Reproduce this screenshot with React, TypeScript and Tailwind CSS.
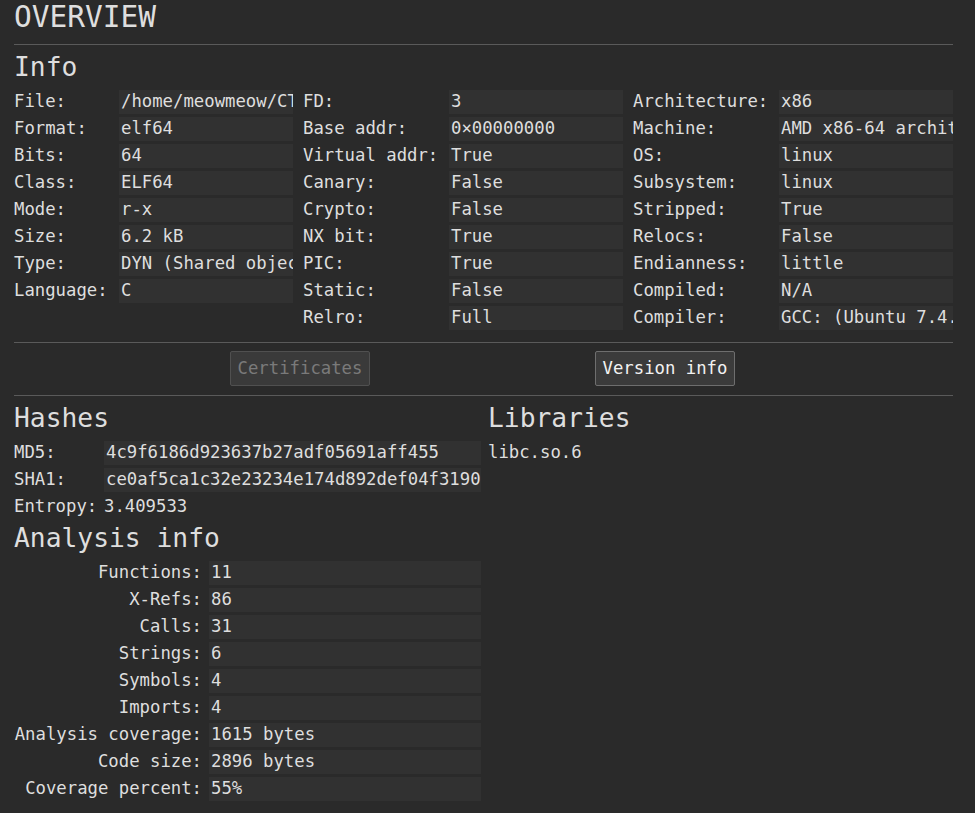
import React from "react";

const font = { fontFamily: '"DejaVu Sans Mono", "Liberation Mono", monospace' };

const col1: [string, string][] = [
  ["File:", "/home/meowmeow/CTF/rev/challenge"],
  ["Format:", "elf64"],
  ["Bits:", "64"],
  ["Class:", "ELF64"],
  ["Mode:", "r-x"],
  ["Size:", "6.2 kB"],
  ["Type:", "DYN (Shared object file)"],
  ["Language:", "C"],
];
const col2: [string, string][] = [
  ["FD:", "3"],
  ["Base addr:", "0×00000000"],
  ["Virtual addr:", "True"],
  ["Canary:", "False"],
  ["Crypto:", "False"],
  ["NX bit:", "True"],
  ["PIC:", "True"],
  ["Static:", "False"],
  ["Relro:", "Full"],
];
const col3: [string, string][] = [
  ["Architecture:", "x86"],
  ["Machine:", "AMD x86-64 architecture"],
  ["OS:", "linux"],
  ["Subsystem:", "linux"],
  ["Stripped:", "True"],
  ["Relocs:", "False"],
  ["Endianness:", "little"],
  ["Compiled:", "N/A"],
  ["Compiler:", "GCC: (Ubuntu 7.4.0-1ubuntu1~18.04.1) 7.4.0"],
];
const analysis: [string, string][] = [
  ["Functions:", "11"],
  ["X-Refs:", "86"],
  ["Calls:", "31"],
  ["Strings:", "6"],
  ["Symbols:", "4"],
  ["Imports:", "4"],
  ["Analysis coverage:", "1615 bytes"],
  ["Code size:", "2896 bytes"],
  ["Coverage percent:", "55%"],
];

function Group({ rows, labelW }: { rows: [string, string][]; labelW: string }) {
  return (
    <div className={`grid ${labelW} gap-y-[3px] auto-rows-[24px]`}>
      {rows.map(([l, v]) => (
        <React.Fragment key={l}>
          <div className="flex items-center whitespace-nowrap">{l}</div>
          <div className="flex items-center bg-[#313131] px-[2px] overflow-hidden whitespace-nowrap">{v}</div>
        </React.Fragment>
      ))}
    </div>
  );
}

function Line() {
  return <div className="h-px bg-[#5a5a5a]" />;
}

export default function App() {
  return (
    <div
      className="w-[975px] h-[813px] overflow-hidden bg-[#2a2a2a] text-[#dedede] text-[17.3px] leading-none pl-[14px] pr-[22px]"
      style={font}
    >
      <div className="h-[44px] flex items-center text-[29.5px] pb-[8px]">OVERVIEW</div>
      <Line />
      <div className="h-[45px] flex items-center text-[26.3px] pb-[1px]">Info</div>
      <div className="flex gap-[10px]">
        <Group rows={col1} labelW="grid-cols-[105px_174px]" />
        <Group rows={col2} labelW="grid-cols-[146px_174px]" />
        <Group rows={col3} labelW="grid-cols-[146px_174px]" />
      </div>
      <div className="h-[12px]" />
      <Line />
      <div className="flex pl-[216px] gap-[225px] pt-[8px] pb-[9px]">
        <button className="h-[35px] w-[140px] flex items-center justify-center bg-[#3a3a3a] border border-[#505050] rounded-[2px] text-[#7a7a7a]">
          Certificates
        </button>
        <button className="h-[35px] w-[140px] flex items-center justify-center bg-[#3b3b3b] border border-[#6e6e6e] rounded-[2px] text-[#f2f2f2]">
          Version info
        </button>
      </div>
      <Line />
      <div className="flex gap-[7px]">
        <div className="w-[467px] flex flex-col">
          <div className="h-[45px] flex items-center text-[26.3px] pb-[1px]">Hashes</div>
          <div className="grid grid-cols-[90px_377px] gap-y-[3px] auto-rows-[24px]">
            <div className="flex items-center">MD5:</div>
            <div className="flex items-center bg-[#313131] px-[2px] whitespace-nowrap overflow-hidden">4c9f6186d923637b27adf05691aff455</div>
            <div className="flex items-center">SHA1:</div>
            <div className="flex items-center bg-[#313131] px-[2px] whitespace-nowrap overflow-hidden">ce0af5ca1c32e23234e174d892def04f3190</div>
            <div className="flex items-center">Entropy:</div>
            <div className="flex items-center">3.409533</div>
          </div>
          <div className="h-[42px] flex items-center text-[26.3px] pb-[4px]">Analysis info</div>
          <div className="grid grid-cols-[188px_272px] gap-x-[7px] gap-y-[3px] auto-rows-[24px]">
            {analysis.map(([l, v]) => (
              <React.Fragment key={l}>
                <div className="flex items-center justify-end whitespace-nowrap">{l}</div>
                <div className="flex items-center bg-[#313131] px-[2px] whitespace-nowrap">{v}</div>
              </React.Fragment>
            ))}
          </div>
        </div>
        <div className="flex-1 flex flex-col">
          <div className="h-[45px] flex items-center text-[26.3px] pb-[1px]">Libraries</div>
          <div className="h-[24px] flex items-center">libc.so.6</div>
        </div>
      </div>
    </div>
  );
}
